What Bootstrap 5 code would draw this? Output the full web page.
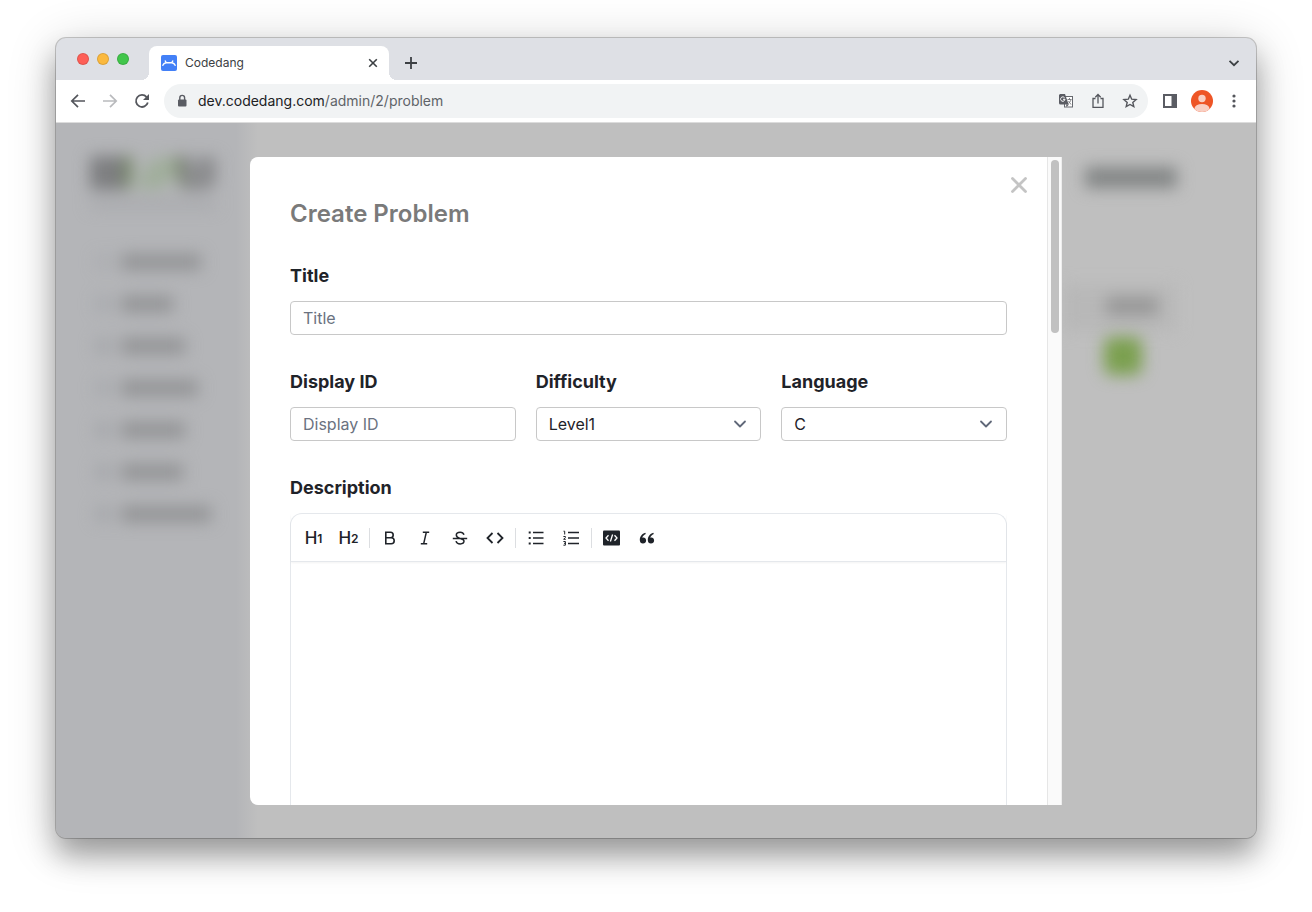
<!DOCTYPE html>
<html lang="en">
<head>
<meta charset="utf-8">
<meta name="viewport" content="width=device-width, initial-scale=1">
<title>Codedang</title>
<link href="https://cdn.jsdelivr.net/npm/bootstrap@5.3.0/dist/css/bootstrap.min.css" rel="stylesheet">
<style>
  body { font-family: Inter, "Liberation Sans", sans-serif; background: #fff; color: #1f2329; }
  .desktop { height: 100vh; padding: 38px 56px 74px; }
  .browser {
    border-radius: 10px;
    background: #bfbfbf;
    box-shadow: 0 0 0 1px rgba(0,0,0,.2), 0 18px 28px rgba(0,0,0,.3), 0 8px 50px rgba(0,0,0,.2);
  }

  /* Tab strip */
  .tab-strip { height: 42px; background: #dee0e5; padding: 8px 16px 0 21px; }
  .lights { height: 26px; gap: 8px; width: 72px; flex: none; }
  .light { width: 12px; height: 12px; border-radius: 50%; border: 1px solid rgba(0,0,0,.12); }
  .light-close { background: #fe5f57; }
  .light-min { background: #fbb93e; }
  .light-max { background: #41c64b; }
  .browser-tab { position: relative; width: 240px; background: #fff; border-radius: 8px 8px 0 0; padding: 0 10px 0 12px; font-size: 12px; line-height: 16px; color: #3c4043; }
  .browser-tab::before, .browser-tab::after { content: ""; position: absolute; bottom: 0; width: 8px; height: 8px; }
  .browser-tab::before { left: -8px; background: radial-gradient(circle at 0 0, transparent 8px, #fff 8px); }
  .browser-tab::after { right: -8px; background: radial-gradient(circle at 100% 0, transparent 8px, #fff 8px); }
  .icon-btn { display: inline-flex; align-items: center; justify-content: center; padding: 0; border: 0; background: none; color: #54565c; flex: none; }

  /* Address row */
  .address-row { height: 43px; background: #fff; border-bottom: 1px solid #dcdcdc; padding: 0 6px; }
  .nav-btn { width: 32px; height: 32px; }
  .address { height: 34px; border-radius: 17px; background: #f1f3f4; padding: 0 2px 0 12px; margin-left: 6px; margin-right: 6px; font-size: 14px; line-height: 20px; color: #5f6368; }
  .address-text { margin-left: 10px; }
  .host { color: #202124; }

  /* Page behind the dialog and the dialog share one grid cell */
  .stage { display: grid; grid-template: minmax(0, 1fr) / minmax(0, 1fr); min-height: 0; }
  .stage > * { grid-area: 1 / 1; min-width: 0; min-height: 0; }
  .backdrop-page { background: linear-gradient(90deg, #b4b5b8 0, #b4b5b8 180px, #bfbfbf 202px); }
  .side { width: 190px; padding: 32px 0 0 30px; }
  .soft { filter: blur(8px); }
  .side-logo { width: 132px; height: 64px; }
  .side-links { padding: 33px 0 0 10px; gap: 22px; }
  .side-link { height: 20px; gap: 10px; }
  .glyph-bar { width: 15px; height: 14px; background: #a3a5a9; }
  .text-bar { height: 16px; background: #929395; }
  .page-tools { width: 194px; padding: 44px 0 0; }
  .user-bar { width: 92px; height: 21px; margin-left: 23px; background: #828585; }
  .head-band { height: 46px; width: 114px; margin-top: 97px; padding: 12px 0 0 44px; background: #b8b8b8; }
  .head-bar { width: 52px; height: 18px; background: #969696; }
  .green-btn { width: 38px; height: 38px; border-radius: 8px; margin: 6px 0 0 42px; background: #7ba04f; }

  /* Dialog */
  .dialog-wrap { padding: 34px 16px 33px; z-index: 1; }
  .dialog-box { width: 100%; max-width: 812px; background: #fff; border-radius: 8px 0 0 8px; }
  .dialog-content { position: relative; padding: 41px 40px 0; min-width: 0; }
  .dialog-close { position: absolute; top: 18px; right: 18px; width: 20px; height: 20px; color: #c4c4c4; }
  .dialog-title { font-size: 24px; line-height: 32px; font-weight: 600; color: #7a7a7a; margin: 0 0 32px; }
  .field-label { display: block; font-size: 18px; line-height: 28px; font-weight: 700; margin: 0 0 11px; }
  .field-gap { margin-bottom: 33px; }
  .field-row { --bs-gutter-x: 20px; }
  .field { height: 34px; border: 1px solid #c8c8c8; border-radius: 4px; padding: 0 12px; font-size: 16px; line-height: 24px; color: #1f2329; }
  .field::placeholder { color: #6b7280; }
  .field.form-select {
    background-image: url("data:image/svg+xml,%3Csvg xmlns='http://www.w3.org/2000/svg' viewBox='0 0 16 16'%3E%3Cpath d='M3 5.5l5 5 5-5' fill='none' stroke='%23606879' stroke-width='1.8' stroke-linecap='round' stroke-linejoin='round'/%3E%3C/svg%3E");
    background-size: 16px 16px; background-position: right 12px center;
  }
  .scroll-track { width: 15px; flex: none; background: #fafafa; border-left: 1px solid #e6e6e6; border-right: 1px solid #ededed; padding: 3px 2px 3px 3px; }
  .scroll-thumb { height: 27%; border-radius: 4px; background: #c1c1c1; }

  /* Rich text editor */
  .editor { border: 1px solid #e5e8ec; border-bottom: 0; border-radius: 12px 12px 0 0; }
  .editor-tools { height: 48px; padding: 0 5px; border-bottom: 1px solid #e5e8ec; box-shadow: 0 1px 2px rgba(0,0,0,.05); }
  .tool { width: 35px; height: 32px; color: #1f2329; font-size: 17px; line-height: 20px; font-weight: 500; }
  .tool-sub { font-size: 12px; font-weight: 600; line-height: 20px; padding-top: 2px; }
  .tool-sep { width: 1px; height: 20px; margin: 0 2px 0 3px; background: #dcdee1; }
  .editor-area { flex: 1; border: 0; outline: 0; resize: none; width: 100%; background: transparent; padding: 16px; }
</style>
</head>
<body>
<div class="desktop">
  <div class="browser h-100 d-flex flex-column overflow-hidden">

    <header class="tab-strip d-flex">
      <div class="lights d-flex align-items-center">
        <span class="light light-close"></span><span class="light light-min"></span><span class="light light-max"></span>
      </div>
      <div class="d-flex flex-grow-1">
        <div class="browser-tab d-flex align-items-center">
          <svg class="me-2" width="16" height="16" viewBox="0 0 16 16" aria-hidden="true"><rect width="16" height="16" rx="2" fill="#4380f7"/><path d="M1.500 10.800Q2.800 8.200 5 7.800H11Q13.200 8.200 14.500 10.800M5.300 7.800L4 5.500M10.700 7.800L12 5.500" fill="none" stroke="#fff" stroke-width="1.400"/></svg>
          <span>Codedang</span>
          <button class="icon-btn ms-auto" type="button" aria-label="Close tab"><svg width="12" height="12" viewBox="0 0 12 12" fill="none" stroke="#3c4043" stroke-width="1.600"><path d="M2.200 2.200l7.600 7.600M9.800 2.200l-7.600 7.600"/></svg></button>
        </div>
        <button class="icon-btn ms-3" type="button" aria-label="New tab"><svg width="12" height="12" viewBox="0 0 12 12" fill="none" stroke="#3c4043" stroke-width="1.800"><path d="M6 0v12M0 6h12"/></svg></button>
      </div>
      <button class="icon-btn" type="button" aria-label="Search tabs"><svg width="12" height="12" viewBox="0 0 12 12" fill="none" stroke="#3c4043" stroke-width="1.800"><path d="M1.500 3.800L6 8.200l4.500-4.400"/></svg></button>
    </header>

    <nav class="address-row d-flex align-items-center" aria-label="Browser toolbar">
      <button class="icon-btn nav-btn" type="button" aria-label="Back"><svg width="16" height="16" viewBox="0 0 16 16" fill="none" stroke="currentColor" stroke-width="1.700"><path d="M15 8H2M8 1.800L1.800 8 8 14.200"/></svg></button>
      <button class="icon-btn nav-btn" type="button" aria-label="Forward"><svg width="16" height="16" viewBox="0 0 16 16" fill="none" stroke="#b9babd" stroke-width="1.700"><path d="M1 8h13M8 1.800L14.200 8 8 14.200"/></svg></button>
      <button class="icon-btn nav-btn" type="button" aria-label="Reload"><svg width="16" height="16" viewBox="0 0 16 16" fill="none" stroke="currentColor" stroke-width="1.800"><path d="M13.800 9.500A6 6 0 1 1 12.600 4.100"/><path d="M15 1v6H9z" fill="currentColor" stroke="none"/></svg></button>
      <div class="address d-flex align-items-center flex-grow-1">
        <svg width="12" height="14" viewBox="0 0 12 14" aria-hidden="true"><rect x="2" y="5.500" width="8.500" height="7" rx="1" fill="#5a5c63"/><path d="M3.800 6V3.800a2.400 2.400 0 0 1 4.800 0V6" fill="none" stroke="#5a5c63" stroke-width="1.400"/></svg>
        <span class="address-text text-nowrap me-auto"><span class="host">dev.codedang.com</span>/admin/2/problem</span>
        <button class="icon-btn nav-btn" type="button" aria-label="Translate"><svg width="16" height="16" viewBox="0 0 16 16"><rect x="6.500" y="3.500" width="8" height="10.500" fill="#fff" stroke="#66686e"/><path d="M2 1h5l3.700 10.500H2.500A1.500 1.500 0 0 1 1 10V2z" fill="#5a5c63"/><path d="M8 11.500h3L8.500 14z" fill="#5a5c63"/><path d="M6.600 4.800A2.200 2.200 0 1 0 7 6.300H5" fill="none" stroke="#fff" stroke-width="1"/><path d="M9.500 6.500h4M11.500 5v1.500M13 6.500c-.5 2-1.500 3-2.500 3.800M10.500 8l2.500 3.500" fill="none" stroke="#74767b" stroke-width=".9"/></svg></button>
        <button class="icon-btn nav-btn" type="button" aria-label="Share"><svg width="16" height="16" viewBox="0 0 16 16" fill="none" stroke="currentColor" stroke-width="1.300"><path d="M5.500 5.500H3v8.800h10V5.500h-2.500M8 10.500V1.700M5.300 4.200L8 1.500l2.700 2.700"/></svg></button>
        <button class="icon-btn nav-btn" type="button" aria-label="Bookmark"><svg width="16" height="16" viewBox="0 0 16 16" fill="none" stroke="currentColor" stroke-width="1.400"><path d="M8 2.200l1.700 4 4.400.4-3.300 2.900 1 4.200L8 11.500l-3.800 2.200 1-4.200-3.300-2.900 4.400-.4z"/></svg></button>
      </div>
      <button class="icon-btn nav-btn" type="button" aria-label="Side panel"><svg width="14" height="14" viewBox="0 0 14 14"><path fill="#5a5c63" fill-rule="evenodd" d="M0 0h14v14H0zM2 2v10h6.500V2z"/></svg></button>
      <button class="icon-btn nav-btn" type="button" aria-label="Profile"><svg width="22" height="22" viewBox="0 0 22 22"><clipPath id="face"><circle cx="11" cy="11" r="11"/></clipPath><g clip-path="url(#face)"><rect width="22" height="22" fill="#ee5526"/><circle cx="11" cy="8.500" r="3.700" fill="#f9cfc3"/><ellipse cx="11" cy="18.500" rx="7.500" ry="4.500" fill="#f9cfc3"/></g></svg></button>
      <button class="icon-btn nav-btn" type="button" aria-label="Menu"><svg width="4" height="14" viewBox="0 0 4 14" fill="#54565c"><circle cx="2" cy="2" r="1.600"/><circle cx="2" cy="7" r="1.600"/><circle cx="2" cy="12" r="1.600"/></svg></button>
    </nav>

    <main class="stage flex-grow-1">
      <div class="backdrop-page d-flex justify-content-between overflow-hidden" aria-hidden="true">
        <div class="side soft">
          <svg class="side-logo d-block" viewBox="0 0 132 64"><path d="M4 1h38v34H4z" fill="#7d7e80"/><path d="M38 2h9l-3 31h-6z" fill="#72895f"/><path d="M48 33L66 3h23v16L75 35z" fill="#a0ae9b"/><path d="M88 2h10v31h-4z" fill="#6f8060"/><path d="M95 1h10l5 22V2h20v25q-3 8-13 8H98z" fill="#8a8b8d"/><path d="M4 46h126v7H4z" fill="#a5a6aa"/></svg>
          <div class="side-links d-flex flex-column">
            <div class="side-link d-flex align-items-center"><span class="glyph-bar opacity-50"></span><span class="text-bar" style="width:80px"></span></div>
            <div class="side-link d-flex align-items-center"><span class="glyph-bar opacity-75"></span><span class="text-bar" style="width:52px"></span></div>
            <div class="side-link d-flex align-items-center"><span class="glyph-bar"></span><span class="text-bar" style="width:64px"></span></div>
            <div class="side-link d-flex align-items-center"><span class="glyph-bar opacity-75"></span><span class="text-bar" style="width:77px"></span></div>
            <div class="side-link d-flex align-items-center"><span class="glyph-bar"></span><span class="text-bar" style="width:64px"></span></div>
            <div class="side-link d-flex align-items-center"><span class="glyph-bar"></span><span class="text-bar" style="width:62px"></span></div>
            <div class="side-link d-flex align-items-center"><span class="glyph-bar"></span><span class="text-bar" style="width:90px"></span></div>
          </div>
        </div>
        <div class="page-tools">
          <div class="user-bar soft"></div>
          <div class="head-band soft"><div class="head-bar"></div></div>
          <div class="green-btn soft"></div>
        </div>
      </div>

      <div class="dialog-wrap d-flex justify-content-center">
        <section class="dialog-box d-flex overflow-hidden" role="dialog" aria-labelledby="dialogTitle">
          <form class="dialog-content flex-grow-1 d-flex flex-column">
            <button class="icon-btn dialog-close" type="button" aria-label="Close"><svg width="18" height="18" viewBox="0 0 18 18" fill="none" stroke="currentColor" stroke-width="2.800" stroke-linecap="round"><path d="M2.500 2.500l13 13M15.500 2.500l-13 13"/></svg></button>
            <h1 class="dialog-title" id="dialogTitle">Create Problem</h1>
            <div class="field-gap">
              <label class="field-label" for="title">Title</label>
              <input class="form-control field" id="title" type="text" placeholder="Title">
            </div>
            <div class="row field-gap field-row">
              <div class="col-4">
                <label class="field-label" for="displayId">Display ID</label>
                <input class="form-control field" id="displayId" type="text" placeholder="Display ID">
              </div>
              <div class="col-4">
                <label class="field-label" for="difficulty">Difficulty</label>
                <select class="form-select field" id="difficulty"><option>Level1</option></select>
              </div>
              <div class="col-4">
                <label class="field-label" for="language">Language</label>
                <select class="form-select field" id="language"><option>C</option></select>
              </div>
            </div>
            <label class="field-label" for="description">Description</label>
            <div class="editor flex-grow-1 d-flex flex-column">
              <div class="editor-tools d-flex align-items-center" role="toolbar" aria-label="Formatting">
                <button class="icon-btn tool" type="button" aria-label="Heading 1">H<span class="tool-sub">1</span></button>
                <button class="icon-btn tool" type="button" aria-label="Heading 2">H<span class="tool-sub">2</span></button>
                <span class="tool-sep"></span>
                <button class="icon-btn tool" type="button" aria-label="Bold"><svg width="16" height="16" viewBox="0 0 16 16" fill="none" stroke="currentColor" stroke-width="1.600"><path d="M3.800 2.300h4.700a2.700 2.700 0 0 1 0 5.400H3.800zM3.800 7.700h5.400a3 3 0 0 1 0 6H3.800z"/></svg></button>
                <button class="icon-btn tool" type="button" aria-label="Italic"><svg width="16" height="16" viewBox="0 0 16 16" fill="none" stroke="currentColor" stroke-width="1.500"><path d="M5.800 2.300h6.400M3.800 13.700h6.400M9.300 2.300L6.700 13.700"/></svg></button>
                <button class="icon-btn tool" type="button" aria-label="Strikethrough"><svg width="16" height="16" viewBox="0 0 16 16" fill="none" stroke="currentColor" stroke-width="1.500"><path d="M.8 8.500h14.400M12 4.800C11.300 2.800 9.800 2.200 8.200 2.200 6 2.200 4.300 3.200 4.300 5c0 1.800 1.800 2.800 3.700 3.400s4 .8 4 2.700-1.700 2.800-3.800 2.800c-2.200 0-3.700-1-4.200-2.800"/></svg></button>
                <button class="icon-btn tool" type="button" aria-label="Code"><svg width="18" height="16" viewBox="0 0 18 16" fill="none" stroke="currentColor" stroke-width="1.800"><path d="M6.500 3l-5 5 5 5M11.500 3l5 5-5 5"/></svg></button>
                <span class="tool-sep"></span>
                <button class="icon-btn tool" type="button" aria-label="Bullet list"><svg width="16" height="16" viewBox="0 0 16 16" fill="none" stroke="currentColor" stroke-width="1.400"><path d="M5 2.500h10.500M5 8h10.500M5 13.500h10.500"/><path d="M.7 2.500h2M.7 8h2M.7 13.500h2" stroke-width="2"/></svg></button>
                <button class="icon-btn tool" type="button" aria-label="Numbered list"><svg width="16" height="16" viewBox="0 0 16 16" fill="none" stroke="currentColor" stroke-width="1.400"><path d="M5 2.500h11M5 8h11M5 13.500h11"/><path d="M.5 1.200h1.200v3.300M.4 6.500h2v1L.6 9.300h2.200M.4 11.500h2v3.700h-2M1 13.300h1.400" stroke-width="1"/></svg></button>
                <span class="tool-sep"></span>
                <button class="icon-btn tool" type="button" aria-label="Code block"><svg width="17" height="16" viewBox="0 0 17 16"><rect y=".5" width="17" height="15" rx="1" fill="currentColor"/><path d="M5.500 5.300L3 8l2.500 2.700M11.500 5.300L14 8l-2.500 2.700M9.600 4.500l-2.200 7" fill="none" stroke="#fff" stroke-width="1.300"/></svg></button>
                <button class="icon-btn tool" type="button" aria-label="Quote"><svg width="16" height="16" viewBox="0 0 16 16" fill="currentColor"><path id="q" d="M6.300 2.700C3 3.700.8 6.500.8 9.900c0 2.200 1.300 3.600 3.200 3.600 1.800 0 3.100-1.300 3.100-3S5.900 7.600 4.300 7.600c-.5 0-.9.100-1.200.200C3.600 6.200 4.800 4.900 6.800 4z"/><use href="#q" x="8"/></svg></button>
              </div>
              <textarea class="editor-area" id="description"></textarea>
            </div>
          </form>
          <div class="scroll-track" aria-hidden="true"><div class="scroll-thumb"></div></div>
        </section>
      </div>
    </main>
  </div>
</div>
<script src="https://cdn.jsdelivr.net/npm/bootstrap@5.3.0/dist/js/bootstrap.bundle.min.js"></script>
</body>
</html>
